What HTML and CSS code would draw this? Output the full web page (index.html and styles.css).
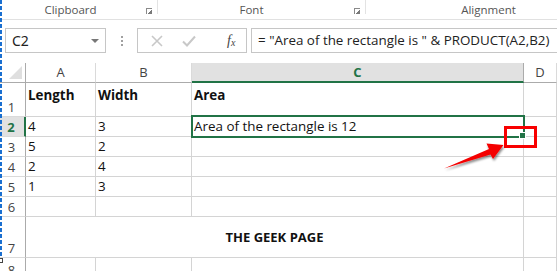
FILE: index.html
```html
<!DOCTYPE html>
<html>
<head>
<meta charset="utf-8">
<link rel="stylesheet" href="styles.css">
</head>
<body>
<div class="page">
  <div class="ribbon">
    <div class="group g-clip"><span>Clipboard</span><i class="launcher"></i></div>
    <div class="group g-font"><span>Font</span><i class="launcher"></i></div>
    <div class="group g-align"><span>Alignment</span></div>
  </div>
  <div class="fbar">
    <div class="namebox"><span>C2</span><i class="caret"></i></div>
    <div class="grip"><i></i><i></i><i></i></div>
    <div class="fbtns">
      <svg class="ico-x" width="12" height="12" viewBox="0 0 12 12"><path d="M1 1L11 11M11 1L1 11" stroke="#c8c8c8" stroke-width="1.6" fill="none"/></svg>
      <svg class="ico-ok" width="14" height="12" viewBox="0 0 14 12"><path d="M1 6.5L5 10.5L13 1.5" stroke="#c8c8c8" stroke-width="2" fill="none"/></svg>
      <span class="fx">f<sub>x</sub></span>
    </div>
    <div class="formula">= "Area of the rectangle is " &amp; PRODUCT(A2,B2)</div>
  </div>
  <div class="sheet">
    <div class="ch corner"><i class="tri"></i></div>
    <div class="ch">A</div>
    <div class="ch">B</div>
    <div class="ch sel">C</div>
    <div class="ch">D</div>

    <div class="rh">1</div>
    <div class="c top b">Length</div>
    <div class="c top b">Width</div>
    <div class="c top b">Area</div>
    <div class="c"></div>

    <div class="rh sel">2</div>
    <div class="c">4</div>
    <div class="c">3</div>
    <div class="c active">Area of the rectangle is 12<i class="selbox"></i><i class="handle"></i></div>
    <div class="c"></div>

    <div class="rh">3</div>
    <div class="c">5</div>
    <div class="c">2</div>
    <div class="c"></div>
    <div class="c"></div>

    <div class="rh">4</div>
    <div class="c">2</div>
    <div class="c">4</div>
    <div class="c"></div>
    <div class="c"></div>

    <div class="rh">5</div>
    <div class="c">1</div>
    <div class="c">3</div>
    <div class="c"></div>
    <div class="c"></div>

    <div class="rh">6</div>
    <div class="c"></div>
    <div class="c"></div>
    <div class="c"></div>
    <div class="c"></div>

    <div class="rh">7</div>
    <div class="c merged">THE GEEK PAGE</div>
    <div class="c"></div>

    <div class="rh last">8</div>
    <div class="c"></div>
    <div class="c"></div>
    <div class="c"></div>
    <div class="c"></div>
  </div>

  <i class="ants"></i>
  <i class="ants-handle"></i>
  <i class="redbox"></i>
  <svg class="arrow" width="557" height="271" viewBox="0 0 557 271">
    <defs>
      <filter id="sh" x="-20%" y="-20%" width="140%" height="140%">
        <feDropShadow dx="1" dy="2" stdDeviation="1.2" flood-color="#000" flood-opacity="0.45"/>
      </filter>
    </defs>
    <path d="M444 168.5 L490.5 154.5 L493 159 L503.5 145 L486.5 143.5 L489 149 Z" fill="#f40000" filter="url(#sh)"/>
  </svg>
</div>
</body>
</html>
```
FILE: styles.css
```css
* { box-sizing: border-box; }
html, body { margin: 0; padding: 0; background: #fff; }
body { width: 557px; height: 271px; overflow: hidden; font-family: "Open Sans", "Liberation Sans", sans-serif; }
.page { position: relative; width: 557px; height: 271px; overflow: hidden; }

.ribbon { display: flex; height: 20px; border-bottom: 1px solid #e1e1e1; }
.group { position: relative; display: flex; justify-content: center; align-items: flex-start; font-size: 11.5px; color: #555; line-height: 19px; }
.g-clip { width: 158px; border-right: 1px solid #e3e3e3; height: 14px; }
.g-font { width: 208px; border-right: 1px solid #e3e3e3; height: 14px; }
.g-clip span { margin-left: -16px; }
.g-font span { margin-left: -20px; }
.g-align { flex: 1; }
.g-align span { margin-left: 54px; }
.launcher { position: absolute; right: 5px; top: 8px; width: 6px; height: 6px; border-left: 1px solid #8a8a8a; border-top: 1px solid #8a8a8a; }
.launcher::after { content: ""; position: absolute; left: 1px; top: 1px; width: 4px; height: 4px; background: linear-gradient(135deg, transparent 45%, #7a7a7a 45%); }

.fbar { display: flex; align-items: stretch; height: 25px; margin-top: 8px; }
.namebox { width: 101px; margin-left: 5px; border: 1px solid #c6c6c6; display: flex; align-items: center; justify-content: space-between; padding: 0 6px 0 6px; font-family: "Noto Sans", "Open Sans", sans-serif; font-size: 14px; color: #222; }
.caret { width: 0; height: 0; border-left: 4px solid transparent; border-right: 4px solid transparent; border-top: 4px solid #777; margin-top: 1px; }
.grip { width: 31px; display: flex; flex-direction: column; align-items: center; justify-content: center; gap: 2px; }
.grip i { width: 2px; height: 2px; background: #a0a0a0; }
.fbtns { width: 110px; border: 1px solid #c6c6c6; display: flex; align-items: center; padding-left: 13px; }
.ico-x { margin-right: 19px; }
.ico-ok { margin-right: 31px; }
.fx { font-family: "Liberation Serif", serif; font-style: italic; font-size: 14px; color: #444; }
.fx sub { font-size: 10px; vertical-align: 0; position: relative; top: 1px; }
.formula { flex: 1; margin-left: 4px; border: 1px solid #c6c6c6; border-right: none; font-family: "Open Sans", sans-serif; font-size: 13.4px; color: #222; padding-left: 6px; line-height: 22px; white-space: nowrap; }

.sheet { display: grid; margin-top: 10px; grid-template-columns: 26px 70px 96px 332px 1fr; grid-template-rows: 20px 34px 20px 20px 20px 20px 20px 41px 20px; font-family: "Open Sans", sans-serif; }
.ch { border-right: 1px solid #dadada; border-bottom: 1px solid #ababab; text-align: center; font-size: 13px; color: #444; line-height: 19px; }
.ch.corner { position: relative; border-right: 1px solid #ababab; }
.tri { position: absolute; right: 3px; bottom: 3px; width: 0; height: 0; border-left: 13px solid transparent; border-bottom: 13px solid #dfdfdf; }
.ch.sel { background: #e1e1e1; border-bottom: 2px solid #217346; color: #217346; font-weight: 700; border-right-color: #ababab; }
.rh { border-right: 1px solid #ababab; border-bottom: 1px solid #dadada; font-size: 13px; color: #444; text-align: center; display: flex; align-items: flex-end; justify-content: center; line-height: 18px; padding-right: 2px; }
.rh.last { align-items: flex-start; line-height: 24px; }
.rh.sel { background: #e1e1e1; color: #217346; font-weight: 700; border-right: 2px solid #217346; }
.c { position: relative; border-right: 1px solid #d4d4d4; border-bottom: 1px solid #d4d4d4; font-size: 13.4px; color: #111; padding-left: 2px; line-height: 19px; white-space: nowrap; }
.c.top { line-height: 24px; }
.b { font-weight: 700; }
.merged { grid-column: 2 / 5; text-align: center; font-weight: 700; font-size: 13px; display: flex; align-items: flex-end; justify-content: center; padding-bottom: 10px; padding-left: 0; }
.selbox { position: absolute; left: -1px; top: -2px; right: -2px; bottom: -2px; border: 2px solid #217346; }
.handle { position: absolute; right: -3px; bottom: -3px; width: 5px; height: 5px; background: #217346; border: 1px solid #fff; box-sizing: content-box; }
.active { z-index: 2; }

.ants { position: absolute; left: 0; top: 0; width: 2px; height: 262px; background: repeating-linear-gradient(to bottom, #1a6fd0 0 4px, transparent 4px 6px); }
.ants-handle { position: absolute; left: -2px; top: 258px; width: 5px; height: 5px; border: 1px solid #444; background: #fff; }
.redbox { position: absolute; left: 504px; top: 126px; width: 33px; height: 22px; border: 3px solid #f80000; z-index: 3; }
.arrow { position: absolute; left: 0; top: 0; z-index: 3; pointer-events: none; }
```
